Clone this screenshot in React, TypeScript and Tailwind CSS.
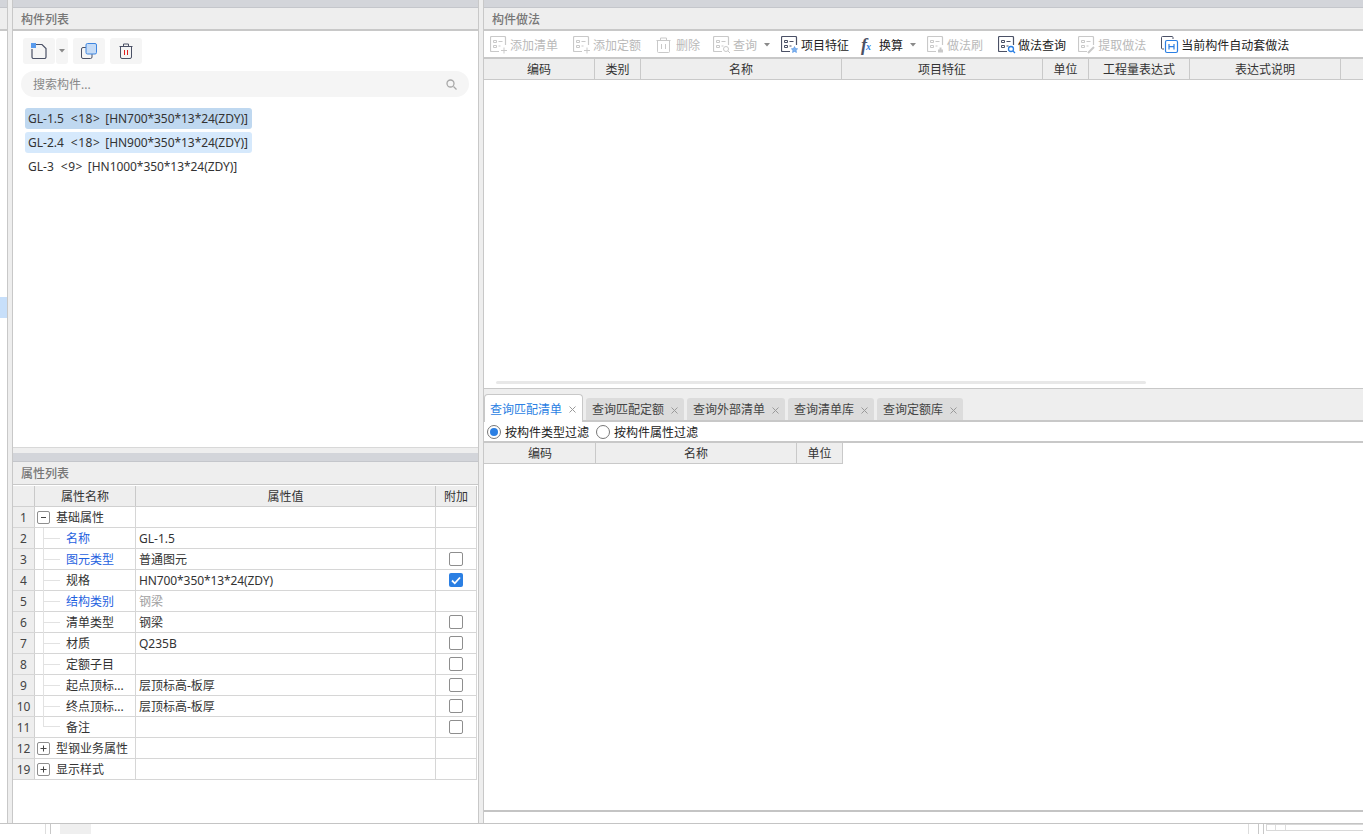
import React from "react";

const font = { fontFamily: '"Noto Sans", "Noto Sans CJK SC", sans-serif' };

const PaneTitle = ({ title, tall }: { title: string; tall?: boolean }) => (
  <div className="shrink-0">
    <div className={`bg-[#d3d5da] border-b border-[#c4c6cb] ${tall ? "h-[9px]" : "h-[8px]"}`} />
    <div className={`flex items-center bg-[#eeeeee] pt-[2px] pl-[8px] text-[12px] font-medium text-[#777777] ${tall ? "h-[22px]" : "h-[21px]"}`}>
      {title}
    </div>
  </div>
);

const Caret = ({ color = "#8a8a8a" }: { color?: string }) => (
  <svg width="6" height="4" viewBox="0 0 6 4" className="shrink-0">
    <path d="M0 0h6L3 3.5z" fill={color} />
  </svg>
);

const DocIcon = ({ stroke, children }: { stroke: string; children?: React.ReactNode }) => (
  <svg width="18" height="18" viewBox="0 0 18 18" fill="none" className="shrink-0">
    <path d="M15.500 9V1.500a1 1 0 0 0-1-1h-13a1 1 0 0 0-1 1v13a1 1 0 0 0 1 1H9" stroke={stroke} strokeWidth="1.200" />
    <path d="M3.500 4.500h3v2h-3zM8.500 5.500h4M3.500 9.500h3v2h-3zM8.500 10h2" stroke={stroke} />
    {children}
  </svg>
);

const ToolItem = ({ icon, label, off, caret, className }: { icon: React.ReactNode; label: string; off?: boolean; caret?: boolean; className?: string }) => (
  <div className={`flex items-center ${className ?? ""}`}>
    <span className="flex w-[20px] shrink-0">{icon}</span>
    <span className={`pt-[2px] ${off ? "text-[#b9b9b9]" : "text-[#222222]"}`}>{label}</span>
    {caret && (
      <span className="ml-[7px]">
        <Caret />
      </span>
    )}
  </div>
);

const off = "#c9c9c9";
const on = "#4b5166";

const Toolbar = () => (
  <div className="flex h-[26px] shrink-0 items-center bg-white pt-px pl-[6px] text-[12px] whitespace-nowrap">
    <ToolItem off label="添加清单" icon={<DocIcon stroke={off}><path d="M11 14.500h6M14 11.500v6" stroke={off} /></DocIcon>} />
    <ToolItem off label="添加定额" className="ml-[15px]" icon={<DocIcon stroke={off}><path d="M11 14.500h6M14 11.500v6" stroke={off} /></DocIcon>} />
    <ToolItem off label="删除" className="ml-[15px]" icon={
      <svg width="15" height="16" viewBox="0 0 15 16" fill="none">
        <path d="M0.500 3.500h14M4.500 3V1h6v2M1.500 4v10.500a1 1 0 0 0 1 1h10a1 1 0 0 0 1-1V4M5.500 7v5M9.500 7v5" stroke={off} />
      </svg>
    } />
    <ToolItem off caret label="查询" className="ml-[13px]" icon={<DocIcon stroke={off}><circle cx="13" cy="13" r="2.500" stroke={off} /><path d="M15 15l2 2" stroke={off} /></DocIcon>} />
    <ToolItem label="项目特征" className="ml-[11px]" icon={<DocIcon stroke={on}><path d="M13.500 10.500l1 2 2.200.3-1.600 1.500.4 2.200-2-1-2 1 .4-2.200-1.600-1.500 2.200-.3z" fill="#7fb2ee" stroke="#3f86e0" strokeWidth="0.500" /></DocIcon>} />
    <div className="ml-[12px] flex items-center">
      <span className="flex w-[18px] shrink-0 font-['Liberation_Serif'] text-[18px] leading-none font-bold text-[#4b5166] italic">
        f<span className="mt-[6px] -ml-px text-[10px] text-[#2b7fe3]">x</span>
      </span>
      <span className="pt-[2px] text-[#222222]">换算</span>
      <span className="ml-[7px]"><Caret /></span>
    </div>
    <ToolItem off label="做法刷" className="ml-[11px]" icon={<DocIcon stroke={off}><path d="M11 16.500v-3h5v3zM12.500 13.500v-2h2v2" fill={off} /></DocIcon>} />
    <ToolItem label="做法查询" className="ml-[15px]" icon={<DocIcon stroke={on}><circle cx="13" cy="13" r="2.500" stroke="#2b7fe3" strokeWidth="1.300" fill="white" /><path d="M15 15l2 2" stroke="#2b7fe3" strokeWidth="1.300" /></DocIcon>} />
    <ToolItem off label="提取做法" className="ml-[12px]" icon={<DocIcon stroke={off}><path d="M10 17l6-6" stroke={off} strokeWidth="2" /></DocIcon>} />
    <ToolItem label="当前构件自动套做法" className="ml-[15px]" icon={
      <svg width="18" height="18" viewBox="0 0 18 18" fill="none">
        <path d="M3 13H1.500a1 1 0 0 1-1-1V1.500a1 1 0 0 1 1-1H11a1 1 0 0 1 1 1V3" stroke={on} />
        <rect x="4.500" y="4.500" width="12" height="12" rx="1.500" stroke="#2b7fe3" strokeWidth="1.200" fill="white" />
        <path d="M8 8v5.500M13 8v5.500M8 10.700h5" stroke="#2b7fe3" strokeWidth="1.200" />
      </svg>
    } />
  </div>
);

const HeadCell = ({ w, children }: { w: string; children?: React.ReactNode }) => (
  <div className={`flex h-full shrink-0 items-center justify-center border-r border-[#c9c9c9] pt-[2px] text-[12px] text-[#333333] ${w}`}>
    {children}
  </div>
);

const Box = ({ checked }: { checked?: boolean }) =>
  checked ? (
    <span className="flex h-[14px] w-[14px] items-center justify-center rounded-[2px] bg-[#2b7fe3]">
      <svg width="10" height="9" viewBox="0 0 10 9" fill="none">
        <path d="M1 4.500l2.800 2.800L9 1.500" stroke="white" strokeWidth="1.800" />
      </svg>
    </span>
  ) : (
    <span className="h-[14px] w-[14px] rounded-[2px] border border-[#8e8e8e] bg-white" />
  );

const Expander = ({ open }: { open?: boolean }) => (
  <span className="mr-[6px] ml-[2px] flex h-[13px] w-[13px] shrink-0 items-center justify-center rounded-[2px] border border-[#8e8e8e] text-[#444444]">
    <svg width="7" height="7" viewBox="0 0 7 7">
      <path d={open ? "M1 3.500h5" : "M0.500 3.500h6M3.500 0.500v6"} stroke="#444444" fill="none" />
    </svg>
  </span>
);

type Row = {
  no: number;
  name: string;
  value?: string;
  blue?: boolean;
  grey?: boolean;
  spec?: boolean;
  box?: "on" | "off";
  group?: "open" | "closed";
  last?: boolean;
};

const rows: Row[] = [
  { no: 1, name: "基础属性", group: "open" },
  { no: 2, name: "名称", value: "GL-1.5", blue: true },
  { no: 3, name: "图元类型", value: "普通图元", blue: true, box: "off" },
  { no: 4, name: "规格", value: "HN700*350*13*24(ZDY)", spec: true, box: "on" },
  { no: 5, name: "结构类别", value: "钢梁", blue: true, grey: true },
  { no: 6, name: "清单类型", value: "钢梁", box: "off" },
  { no: 7, name: "材质", value: "Q235B", box: "off" },
  { no: 8, name: "定额子目", box: "off" },
  { no: 9, name: "起点顶标...", value: "层顶标高-板厚", box: "off" },
  { no: 10, name: "终点顶标...", value: "层顶标高-板厚", box: "off" },
  { no: 11, name: "备注", box: "off", last: true },
  { no: 12, name: "型钢业务属性", group: "closed" },
  { no: 19, name: "显示样式", group: "closed" },
];

const PropRow = ({ row }: { row: Row }) => (
  <div className="flex h-[21px] w-[464px] shrink-0 border-b border-[#d6d6d6] text-[12px] text-[#333333]">
    <div className="flex w-[22px] shrink-0 items-center justify-center border-r border-[#d0d0d0] bg-[#eeeeee] pt-[2px] text-[#444444]">{row.no}</div>
    <div className="flex w-[101px] shrink-0 items-center border-r border-[#d6d6d6] whitespace-nowrap">
      {row.group ? (
        <>
          <Expander open={row.group === "open"} />
          <span className="pt-[2px]">{row.name}</span>
        </>
      ) : (
        <>
          {row.last ? (
            <span className="ml-[8px] h-[10px] w-[17px] shrink-0 self-start border-b border-l border-[#e2e2e2]" />
          ) : (
            <span className="ml-[8px] flex h-[21px] w-[17px] shrink-0 items-center self-start border-l border-[#e2e2e2]">
              <span className="h-px w-full bg-[#e2e2e2]" />
            </span>
          )}
          <span className={`ml-[6px] pt-[2px] ${row.blue ? "text-[#1f62e0]" : ""}`}>{row.name}</span>
        </>
      )}
    </div>
    <div className={`flex w-[300px] shrink-0 items-center border-r border-[#d6d6d6] pt-[2px] pl-[3px] ${row.grey ? "text-[#a0a0a0]" : ""} ${row.spec ? "tracking-[-0.1px]" : ""}`}>{row.value}</div>
    <div className="flex flex-1 items-center justify-center border-r border-[#d6d6d6]">
      {row.box && <Box checked={row.box === "on"} />}
    </div>
  </div>
);

const specs = [
  { name: "GL-1.5", count: "<18>", size: "[HN700*350*13*24(ZDY)]", bg: "bg-[#bfd8f0]" },
  { name: "GL-2.4", count: "<18>", size: "[HN900*350*13*24(ZDY)]", bg: "bg-[#d6e9fc]" },
  { name: "GL-3", count: "<9>", size: "[HN1000*350*13*24(ZDY)]", bg: "" },
];

const tabs = [
  { label: "查询匹配清单", w: "w-[99px]", active: true },
  { label: "查询匹配定额", w: "w-[98px]" },
  { label: "查询外部清单", w: "w-[98px]" },
  { label: "查询清单库", w: "w-[86px]" },
  { label: "查询定额库", w: "w-[86px]" },
];

const IconBtn = ({ children, className }: { children: React.ReactNode; className?: string }) => (
  <div className={`flex h-[26px] items-center justify-center rounded-[3px] bg-[#f5f5f5] ${className ?? "w-[32px]"}`}>{children}</div>
);

const Radio = ({ checked }: { checked?: boolean }) => (
  <span className="flex h-[14px] w-[14px] shrink-0 items-center justify-center rounded-full border border-[#777777] bg-white">
    {checked && <span className="h-[8px] w-[8px] rounded-full bg-[#2b7fe3]" />}
  </span>
);

const CloseX = () => (
  <svg width="7" height="7" viewBox="0 0 7 7" fill="none" className="mt-[2px] shrink-0">
    <path d="M0.500 0.500l6 6M6.500 0.500l-6 6" stroke="#9a9a9a" />
  </svg>
);

export default function App() {
  return (
    <div className="flex h-[834px] w-[1363px] flex-col overflow-hidden bg-white" style={font}>
      <div className="flex h-[823px] shrink-0">
        {/* narrow tree at the far left, mostly cut off */}
        <div className="flex w-[7px] shrink-0 flex-col bg-white">
          <PaneTitle title="" />
          <div className="h-[2px] bg-[#c8c8c8]" />
          <div className="mt-[266px] h-[21px] bg-[#c7dffa]" />
        </div>
        <div className="w-[6px] shrink-0 border-x border-[#c8c8c8] bg-[#eeeeee]" />

        {/* left column */}
        <div className="flex w-[466px] shrink-0 flex-col border-r border-[#c8c8c8] bg-[#eeeeee]">
          <div className="flex h-[448px] shrink-0 flex-col border-b border-[#d8d8d8] bg-white">
            <PaneTitle title="构件列表" />
            <div className="h-[2px] shrink-0 bg-[#c8c8c8]" />
            <div className="flex items-center pt-[7px] pl-[10px]">
              <IconBtn>
                <svg width="16" height="16" viewBox="0 0 16 16" fill="none">
                  <path d="M5 1.500h6l4 4v8.500a1.500 1.500 0 0 1-1.500 1.500h-11a1.500 1.500 0 0 1-1.500-1.500V6" stroke="#4b5166" strokeWidth="1.200" />
                  <rect x="0" y="0" width="5" height="5" fill="#5a9bec" />
                </svg>
              </IconBtn>
              <IconBtn className="ml-px w-[12px]"><Caret /></IconBtn>
              <IconBtn className="ml-[5px] w-[32px]">
                <svg width="16" height="16" viewBox="0 0 16 16" fill="none">
                  <rect x="0.500" y="4.500" width="10.500" height="11" rx="1.500" stroke="#4b5166" />
                  <rect x="5" y="0.500" width="10.500" height="10.500" rx="1.500" fill="#c5dbf6" stroke="#3f86e0" />
                </svg>
              </IconBtn>
              <IconBtn className="ml-[5px] w-[32px]">
                <svg width="14" height="16" viewBox="0 0 14 16" fill="none">
                  <path d="M0.500 3.500h13M4.500 3V1h5v2M1.500 4v10a1.500 1.500 0 0 0 1.500 1.500h8a1.500 1.500 0 0 0 1.500-1.500V4" stroke="#4b5166" />
                  <path d="M5.500 7v5M8.500 7v5" stroke="#e02020" />
                </svg>
              </IconBtn>
            </div>
            <div className="mt-[7px] mr-[9px] ml-[8px] flex h-[26px] items-center justify-between rounded-full bg-[#f5f5f5] pr-[12px] pl-[12px] text-[12px] text-[#888888]">
              <span className="pt-[2px]">搜索构件...</span>
              <svg width="11" height="11" viewBox="0 0 11 11" fill="none">
                <circle cx="4.500" cy="4.500" r="3.500" stroke="#a8a8a8" strokeWidth="1.300" />
                <path d="M7.500 7.500l3 3" stroke="#a8a8a8" strokeWidth="1.300" />
              </svg>
            </div>
            <div className="mt-[11px] flex flex-col items-start gap-[3px] pl-[12px] text-[12px] whitespace-pre text-[#333333]">
              {specs.map((s) => (
                <div key={s.name} className={`flex h-[21px] w-[227px] items-center rounded-[3px] pl-[3px] ${s.bg}`}>
                  <span>{s.name}</span>
                  <span className="ml-[7px] tracking-[0.5px]">{s.count}</span>
                  <span className="ml-[5px] tracking-[-0.06px]">{s.size}</span>
                </div>
              ))}
            </div>
          </div>

          <div className="mt-[5px] flex flex-1 flex-col bg-white">
            <PaneTitle title="属性列表" tall />
            <div className="mb-px h-px shrink-0 bg-[#c8c8c8]" />
            <div className="flex h-[21px] w-[464px] shrink-0 border-b border-[#d0d0d0] bg-[#eeeeee]">
              <HeadCell w="w-[22px]" />
              <HeadCell w="w-[101px]">属性名称</HeadCell>
              <HeadCell w="w-[300px]">属性值</HeadCell>
              <HeadCell w="flex-1">附加</HeadCell>
            </div>
            {rows.map((r) => (
              <PropRow key={r.no} row={r} />
            ))}
          </div>
        </div>

        <div className="w-[4px] shrink-0 bg-[#eeeeee]" />

        {/* right column */}
        <div className="flex min-w-0 flex-1 flex-col border-l border-[#c8c8c8] bg-[#eeeeee] text-[12px]">
          <div className="flex h-[389px] shrink-0 flex-col border-b border-[#c8c8c8] bg-white">
            <PaneTitle title="构件做法" />
            <div className="h-[2px] shrink-0 bg-[#c8c8c8]" />
            <Toolbar />
            <div className="h-[2px] shrink-0 bg-[#c8c8c8]" />
            <div className="flex h-[21px] shrink-0 border-b border-[#c9c9c9] bg-[#eeeeee]">
              <HeadCell w="w-[111px]">编码</HeadCell>
              <HeadCell w="w-[46px]">类别</HeadCell>
              <HeadCell w="w-[201px]">名称</HeadCell>
              <HeadCell w="w-[201px]">项目特征</HeadCell>
              <HeadCell w="w-[46px]">单位</HeadCell>
              <HeadCell w="w-[101px]">工程量表达式</HeadCell>
              <HeadCell w="w-[151px]">表达式说明</HeadCell>
            </div>
            <div className="flex flex-1 items-end pb-[4px] pl-[12px]">
              <div className="h-[3px] w-[650px] rounded-full bg-[#e8e8e8]" />
            </div>
          </div>

          <div className="mt-[5px] flex h-[28px] shrink-0 items-end gap-[3px] border-b-2 border-[#c8c8c8]">
            {tabs.map((t) => (
              <div
                key={t.label}
                className={
                  t.active
                    ? `mb-[-2px] flex h-[28px] items-center justify-between rounded-t-[4px] border border-b-0 border-[#c8c8c8] bg-white pr-[6px] pl-[5px] text-[#2b7fe3] ${t.w}`
                    : `flex h-[22px] items-center justify-between rounded-t-[3px] bg-[#dcdcdc] pr-[6px] pl-[6px] text-[#444444] ${t.w}`
                }
              >
                <span className="pt-[2px]">{t.label}</span>
                <CloseX />
              </div>
            ))}
          </div>

          <div className="flex flex-1 flex-col border-b-2 border-[#c4c4c4] bg-white">
            <div className="flex h-[19px] shrink-0 items-center pl-[3px] text-[#222222]">
              <Radio checked />
              <span className="ml-[4px] pt-[2px]">按构件类型过滤</span>
              <span className="ml-[7px]"><Radio /></span>
              <span className="ml-[4px] pt-[2px]">按构件属性过滤</span>
            </div>
            <div className="h-[2px] shrink-0 bg-[#c8c8c8]" />
            <div className="flex h-[21px] w-[359px] shrink-0 border-b border-[#c9c9c9] bg-[#eeeeee] pl-px">
              <HeadCell w="w-[111px]">编码</HeadCell>
              <HeadCell w="w-[201px]">名称</HeadCell>
              <HeadCell w="w-[46px]">单位</HeadCell>
            </div>
          </div>
          <div className="h-[11px] shrink-0 bg-white" />
        </div>
      </div>

      <div className="h-px shrink-0 bg-[#c4c4c4]" />

      {/* next pane peeking in at the bottom edge */}
      <div className="flex flex-1 items-stretch bg-white">
        <div className="ml-[45px] w-px bg-[#dddddd]" />
        <div className="ml-[4px] w-px bg-[#c8c8c8]" />
        <div className="ml-[9px] w-[31px] bg-[#efefef]" />
        <div className="ml-[1157px] w-px bg-[#dddddd]" />
        <div className="ml-[9px] w-px bg-[#c8c8c8]" />
        <div className="ml-[4px] w-px bg-[#c8c8c8]" />
        <div className="ml-[2px] flex h-[7px] flex-1 border-y border-l border-[#d8d8d8]">
          <div className="w-[9px] border-r border-[#dddddd]" />
          <div className="w-[10px] border-r border-[#dddddd]" />
        </div>
      </div>
    </div>
  );
}
